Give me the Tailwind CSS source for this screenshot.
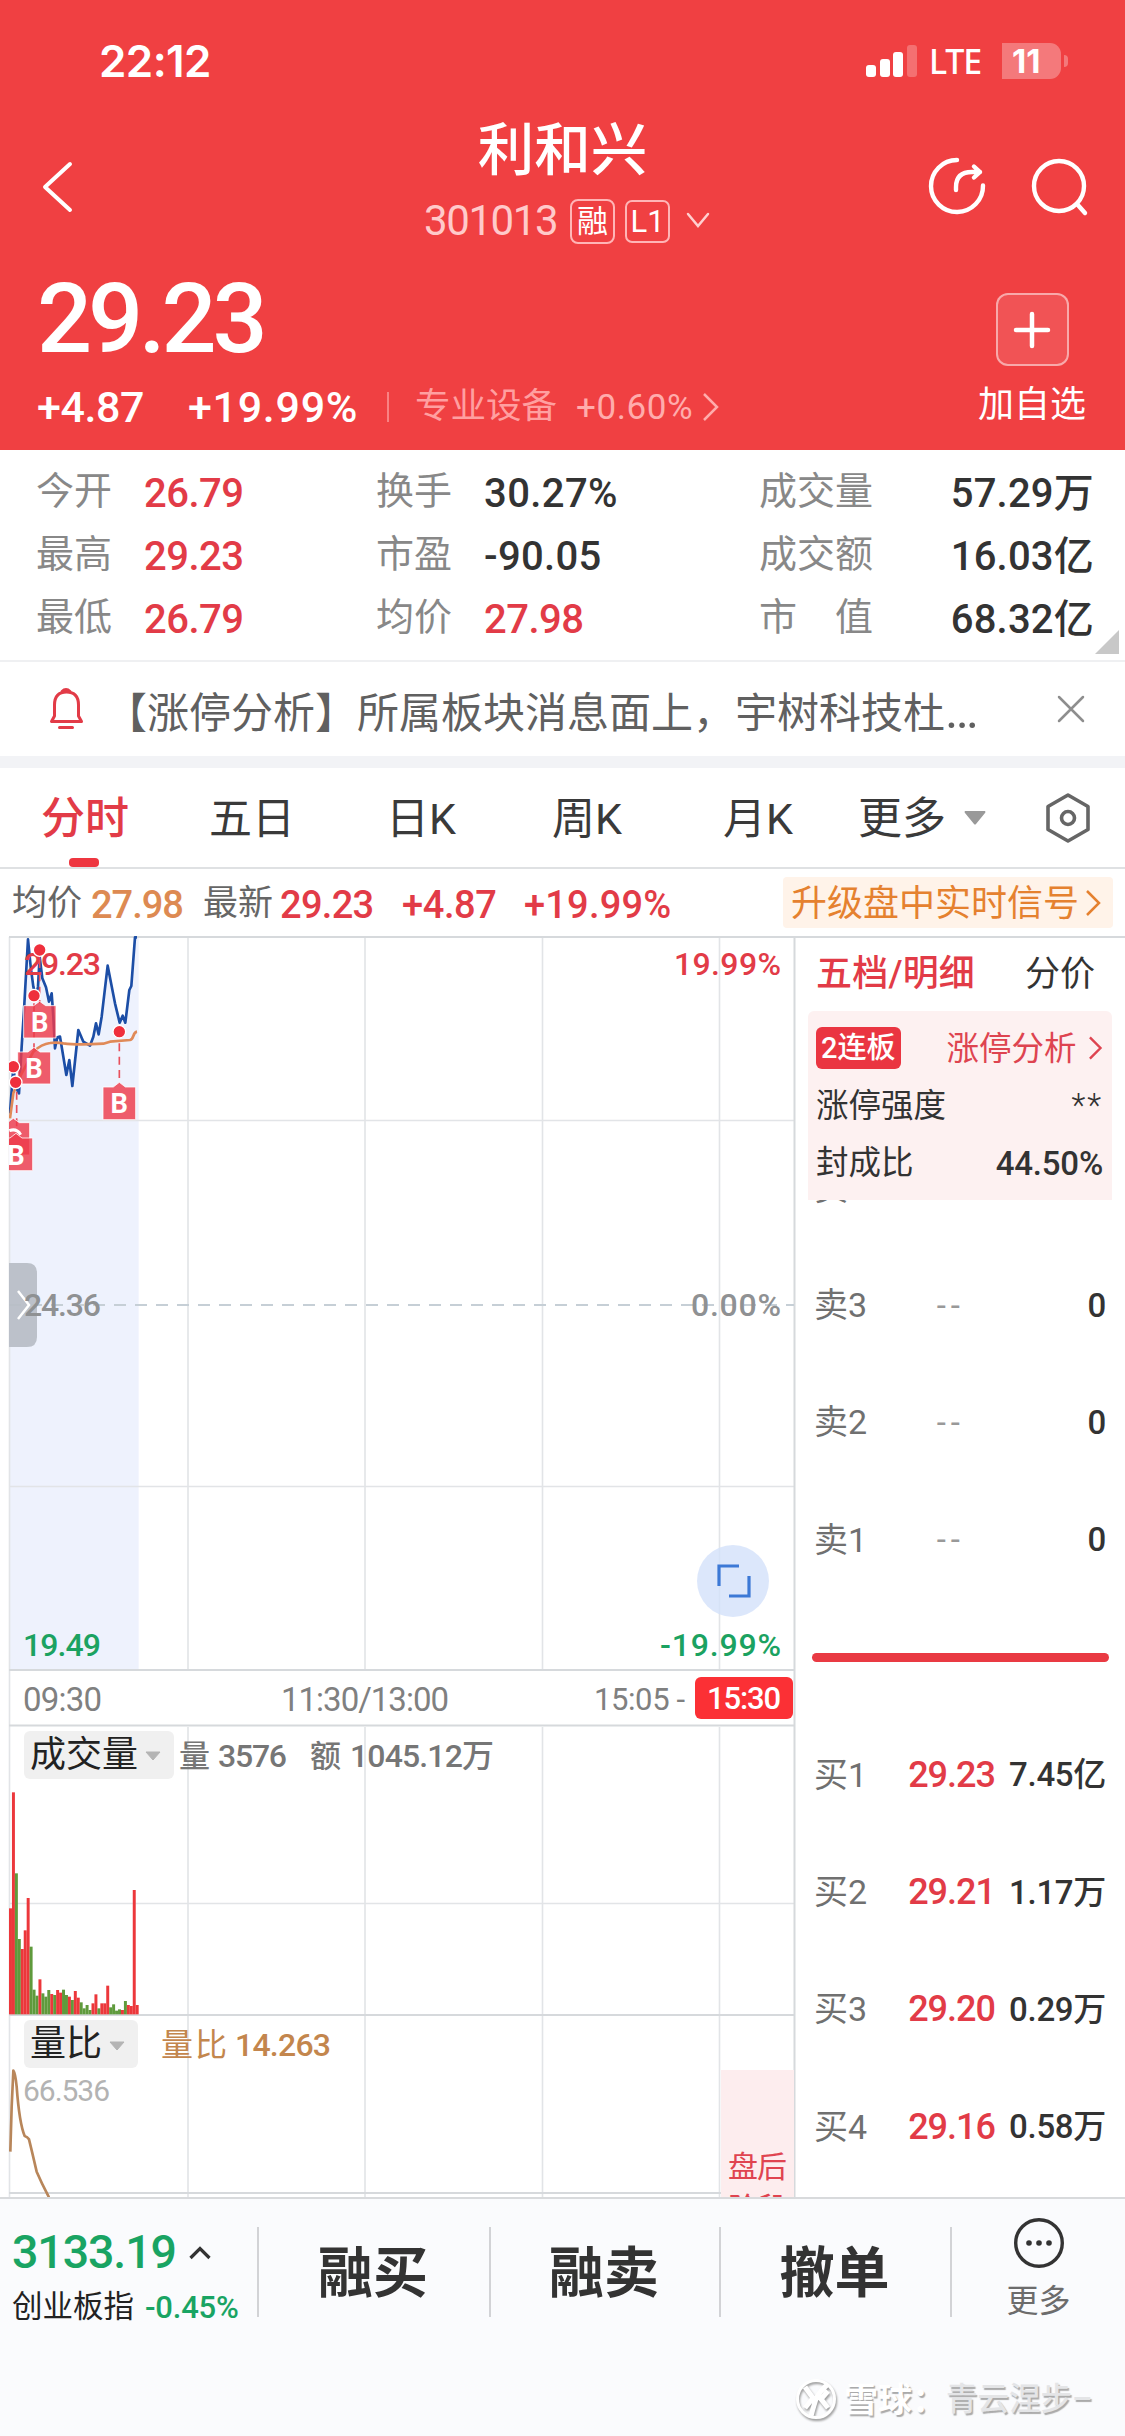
<!DOCTYPE html>
<html lang="zh-CN">
<head>
<meta charset="utf-8">
<title>利和兴 301013</title>
<script src="https://cdn.jsdelivr.net/npm/@tailwindcss/browser@4"></script>
</head>
<body class="w-[1125px] h-[2436px] overflow-hidden bg-white font-[Roboto,'Noto_Sans_CJK_SC',sans-serif] text-[#333] whitespace-nowrap">

<!-- header -->
<header class="h-[450px] bg-[#f04042] text-white">
  <div class="h-[122px] flex items-center pl-[99px]">
    <div class="w-[767px] font-[Inter,sans-serif] font-semibold text-[44px] leading-none tracking-[-0.6px]">22:12</div>
    <svg class="w-[52px] h-[34px]" viewBox="866 44 52 34" fill="#fff"><rect x="866" y="65" width="10" height="12" rx="3"/><rect x="880" y="59" width="10" height="18" rx="3"/><rect x="893" y="52" width="10" height="25" rx="3"/><rect x="907" y="45" width="10" height="32" rx="3" opacity=".25"/></svg>
    <div class="ml-[11px] w-[73px] font-['Noto_Sans'] font-medium text-[34px] leading-none tracking-[-1.2px]">LTE</div>
    <div class="w-[59px] h-[36px] rounded-r-[11px] bg-white/30 font-[Inter,sans-serif] font-bold text-[33px] leading-[36px] pl-[10px]">11</div>
    <div class="ml-[3px] w-[4px] h-[12px] rounded-r-full bg-white/30"></div>
  </div>
  <div class="h-[128px] flex">
    <div class="w-[422px] pt-[38px] pl-[41px]"><svg class="w-[34px] h-[54px]" viewBox="41 160 34 54" fill="none" stroke="#fff" stroke-width="4" stroke-linecap="round" stroke-linejoin="round"><path d="M70 164L45 187L70 210"/></svg></div>
    <div class="w-[500px]">
      <div class="h-[58px] leading-[58px] w-[281px] text-center text-[56.500px] font-medium">利和兴</div>
      <div class="h-[82px] flex items-center">
        <div class="w-[148px] pl-[2px] text-[42px] leading-none tracking-[-1.4px] text-[#ffcaca]">301013</div>
        <div class="w-[45px] h-[45px] rounded-[8px] border-2 border-[#ffb5b6] flex items-center justify-center text-[31px] leading-none">融</div>
        <div class="ml-[10px] w-[45px] h-[43px] rounded-[7px] border-2 border-[#ffb5b6] flex items-center justify-center text-[31px] leading-none">L1</div>
        <svg class="ml-[15px] w-[26px] h-[18px]" viewBox="0 0 26 18" fill="none" stroke="#ffcfcf" stroke-width="2.5" stroke-linecap="round"><path d="M3 2L13 14L23 2"/></svg>
      </div>
    </div>
    <div class="pt-[34px] flex"><svg class="w-[180px] h-[64px]" viewBox="922 156 180 64" fill="none" stroke="#fff" stroke-width="4.4" stroke-linecap="round" stroke-linejoin="round"><path d="M957 160A26 26 0 1 0 983 185.500M956 190V187Q956 172 972 172H980M974 166.500L980 172L974 177.500"/><circle cx="1059" cy="186" r="25"/><path d="M1077 204L1085 213"/></svg></div>
  </div>
  <div class="h-[200px] flex justify-between">
    <div class="pl-[37px]">
      <div class="h-[136px] leading-[138px] text-[97px] font-medium tracking-[-4.2px]">29.23</div>
      <div class="h-[42px] flex items-center leading-none">
        <div class="w-[151px] text-[43px] font-medium tracking-[-0.4px]">+4.87</div>
        <div class="w-[199px] text-[43px] font-medium tracking-[0.7px]">+19.99%</div>
        <div class="w-[2px] h-[30px] bg-[#f98283]"></div>
        <div class="ml-[26px] w-[161px] text-[35.500px] text-[#ff9fa0]">专业设备</div>
        <div class="w-[125px] text-[35px] text-[#ffacac] tracking-[0.6px]">+0.60%</div>
        <svg class="w-[20px] h-[30px]" viewBox="0 0 20 30" fill="none" stroke="#ffacac" stroke-width="2.5"><path d="M3 2L16 15L3 28"/></svg>
      </div>
    </div>
    <div class="pt-[43px] pr-[39px] flex flex-col items-center w-[147px]">
      <div class="w-[73px] h-[73px] rounded-[12px] border-2 border-white/50 bg-white/10 flex items-center justify-center"><svg class="w-[40px] h-[40px]" viewBox="0 0 40 40" stroke="#fff" stroke-width="4.500" stroke-linecap="round"><path d="M4 20H36M20 4V36"/></svg></div>
      <div class="mt-[18px] text-[36px] leading-[42px]">加自选</div>
    </div>
  </div>
</header>

<!-- key figures -->
<section class="relative h-[212px] border-b-2 border-[#eff0f2] pt-[10px] pl-[36px] text-[40px] font-medium tracking-[-0.5px]">
  <div class="grid grid-cols-[108px_232px_108px_275px_140px_195px] auto-rows-[63px] leading-[68px]">
    <div class="text-[38px] leading-[63px] font-normal tracking-normal text-[#888]">今开</div><div class="text-[#e23b47]">26.79</div>
    <div class="text-[38px] leading-[63px] font-normal tracking-normal text-[#888]">换手</div><div class="tracking-[0.4px]">30.27%</div>
    <div class="text-[38px] leading-[63px] font-normal tracking-normal text-[#888]">成交量</div><div class="text-right tracking-[0.2px]">57.29万</div>
    <div class="text-[38px] leading-[63px] font-normal tracking-normal text-[#888]">最高</div><div class="text-[#e23b47]">29.23</div>
    <div class="text-[38px] leading-[63px] font-normal tracking-normal text-[#888]">市盈</div><div class="tracking-[0.3px]">-90.05</div>
    <div class="text-[38px] leading-[63px] font-normal tracking-normal text-[#888]">成交额</div><div class="text-right tracking-[0.2px]">16.03亿</div>
    <div class="text-[38px] leading-[63px] font-normal tracking-normal text-[#888]">最低</div><div class="text-[#e23b47]">26.79</div>
    <div class="text-[38px] leading-[63px] font-normal tracking-normal text-[#888]">均价</div><div class="text-[#e23b47]">27.98</div>
    <div class="text-[38px] leading-[63px] font-normal tracking-normal text-[#888]">市　值</div><div class="text-right tracking-[0.2px]">68.32亿</div>
  </div>
  <svg class="absolute right-[6px] bottom-[6px] w-[24px] h-[24px]" viewBox="0 0 24 24" fill="#c8c8c8"><path d="M24 0V24H0Z"/></svg>
</section>

<!-- notice -->
<section class="h-[94px] flex items-center pl-[48px]">
  <svg class="w-[57px] h-[44px]" viewBox="48 686 57 44" fill="none" stroke="#e23b47" stroke-width="3" stroke-linecap="round" stroke-linejoin="round"><path d="M62 690.500Q66 686.500 70 690.500M51.500 720.500H81.500L78.500 715V704Q78.500 691 66.500 691Q54.500 691 54.500 704V715ZM59.500 726.500H72.500"/></svg>
  <div class="w-[952px] pt-[4px] text-[42px] leading-none text-[#606060]">【涨停分析】所属板块消息面上，宇树科技杜<span class="text-[50px] leading-none">…</span></div>
  <svg class="w-[28px] h-[28px]" viewBox="0 0 28 28" fill="none" stroke="#8e8e8e" stroke-width="2.500" stroke-linecap="round"><path d="M2 2L26 26M26 2L2 26"/></svg>
</section>
<div class="h-[12px] bg-[#f2f3f6]"></div>

<!-- period tabs -->
<nav class="h-[101px] border-b-2 border-[#dfe1e3] flex items-center pl-[41px] text-[43px] leading-[45px] text-[#3a3a3a]">
  <div class="relative w-[168px] h-full flex items-center pt-[3px] text-[44px] font-medium text-[#e23b47]">分时<span class="absolute left-[28px] bottom-0 w-[30px] h-[9px] rounded-[4px] bg-[#ee3640]"></span></div>
  <div class="w-[177px] pt-[3px]">五日</div>
  <div class="w-[166px] pt-[3px]">日K</div>
  <div class="w-[171px] pt-[3px]">周K</div>
  <div class="w-[135px] pt-[3px]">月K</div>
  <div class="w-[106px] pt-[3px] text-[44px]">更多</div>
  <svg class="w-[22px] h-[14px]" viewBox="0 0 22 14" fill="#999"><path d="M1 0H21Q22 1 21 2L12 13Q11 14 10 13L1 2Q0 1 1 0Z"/></svg>
  <svg class="ml-[59px] w-[46px] h-[52px]" viewBox="1045 791 46 52" fill="none" stroke="#666" stroke-width="3.600" stroke-linejoin="round"><path d="M1068 794L1088 805.500V828.500L1068 840L1048 828.500V805.500Z"/><circle cx="1068" cy="817" r="6.500"/></svg>
</nav>

<!-- summary line -->
<div class="h-[67px] flex items-center pl-[12px] text-[38px] leading-none font-medium tracking-[-1px] text-[#e23b47]">
  <div class="w-[79px] pt-[2px] text-[35px] font-normal tracking-normal text-[#666]">均价</div><div class="w-[112px] pt-[4px] text-[#dd8a52]">27.98</div>
  <div class="w-[77px] pt-[2px] text-[35px] font-normal tracking-normal text-[#666]">最新</div><div class="w-[122px] pt-[4px] tracking-[-0.7px]">29.23</div>
  <div class="w-[122px] pt-[4px] tracking-[-0.4px]">+4.87</div><div class="w-[259px] pt-[4px] tracking-[0.2px]">+19.99%</div>
  <div class="w-[330px] h-[51px] rounded-[4px] bg-[#fff3e9] flex items-center pl-[8px] text-[36px] font-normal tracking-normal text-[#e5812f]"><span class="pt-[2px]">升级盘中实时信号</span><svg class="ml-[5px] w-[18px] h-[30px]" viewBox="0 0 18 30" fill="none" stroke="#e5812f" stroke-width="2.500"><path d="M3 3L15 15L3 27"/></svg></div>
</div>

<main class="h-[1261px] flex overflow-hidden">
  <!-- charts -->
  <div class="w-[796px]">
    <svg class="block w-[796px] h-[1261px]" viewBox="0 936 796 1261" font-family="Roboto, 'Noto Sans CJK SC', sans-serif" font-size="32">
      <defs><clipPath id="plot"><rect x="27" y="100" width="2400" height="2400"/></clipPath></defs>
      <g transform="translate(0 900) scale(.33333)" clip-path="url(#plot)">
        <path fill="#eef2fd" d="M30 640L35 570L40 500L47 560L57 580L65 440L72 330L84 118L92 200L100 260L108 290L114 260L119 170L127 235L138 262L147 305L155 280L160 350L165 445L172 412L180 410L190 470L199 525L208 480L217 558L235 390L250 425L270 437L280 410L288 370L296 403L305 350L323 197L345 310L359 368L368 347L376 368L388 270L394 258L405 112H416V2312H30Z"/>
      </g>
      <g fill="none" stroke="#e2e4e7" stroke-width="1.600">
        <path d="M9.500 937V2197M188 937V1671M365 937V1671M542.500 937V1671M719.500 937V1671M188 1727V2197M365 1727V2197M542.500 1727V2197M719.500 1727V2197M9 1120.500H794M9 1486.500H794M9 1903.500H794"/>
        <path stroke="#d6d9dc" stroke-width="2" d="M794.500 937V2197M9 937H796M9 1670H795M9 1725.500H795M9 2015H795M9 2193H795"/>
        <path stroke="#c6cfd6" stroke-width="2" stroke-dasharray="12 9" d="M9 1305H794"/>
      </g>
      <path d="M9 1263H27Q37 1263 37 1273V1337Q37 1347 27 1347H9Z" fill="#b8bdc6" opacity=".93"/>
      <path d="M18 1291L29 1305L18 1319" fill="none" stroke="#fff" stroke-width="2.500"/>
      <g transform="translate(0 900) scale(.33333)" clip-path="url(#plot)" fill="none" stroke-linejoin="round">
        <path stroke="#1c4ea6" stroke-width="8" d="M30 640L35 570L40 500L47 560L57 580L65 440L72 330L84 118L92 200L100 260L108 290L114 260L119 170L127 235L138 262L147 305L155 280L160 350L165 445L172 412L180 410L190 470L199 525L208 480L217 558L235 390L250 425L270 437L280 410L288 370L296 403L305 350L323 197L345 310L359 368L368 347L376 368L388 270L394 258L405 112H411"/>
        <path stroke="#e08a58" stroke-width="8" d="M30 655L40 580L60 530L100 455Q125 432 150 429Q170 426 190 430Q230 436 310 431L330 425L390 420Q397 418 400 408Q404 396 411 395"/>
      </g>
      <g fill="#e23b47" font-weight="500">
        <text x="24" y="975" textLength="77">29.23</text>
        <text x="674" y="975" textLength="107">19.99%</text>
      </g>
      <g transform="translate(0 900) scale(.33333)" clip-path="url(#plot)">
        <g stroke="#e8505c" stroke-width="5" stroke-dasharray="24 16" fill="none"><path d="M358 430V545M119 180V310M102 310V450M50 575V700"/></g>
        <g fill="#ee3a4b" fill-opacity=".82" stroke="#fff" stroke-opacity=".8" stroke-width="3">
          <path d="M-9 668H22L40 655L58 668H89V765H-9Z"/>
          <path d="M-1 714H30L48 700L66 714H98V812H-1Z"/>
          <path d="M53 456H84L102 442L120 456H152V552H53Z"/>
          <path d="M71 317H101L119 304L137 317H168V414H71Z"/>
          <path d="M309 561H340L358 547L376 561H407V659H309Z"/>
        </g>
        <path d="M28 692Q50 684 62 704" fill="none" stroke="#fff" stroke-width="9"/>
        <g fill="#ef2f3c" stroke="#fff" stroke-width="4"><circle cx="40" cy="500" r="19"/><circle cx="47" cy="547" r="19"/><circle cx="102" cy="287" r="19"/><circle cx="119" cy="150" r="19"/><circle cx="358" cy="395" r="19"/></g>
        <g fill="#fff" font-family="Roboto, sans-serif" font-size="82" font-weight="700" text-anchor="middle"><text x="48" y="795">B</text><text x="102" y="535">B</text><text x="119" y="397">B</text><text x="358" y="640">B</text></g>
      </g>
      <g fill="#8f9193" font-weight="500">
        <text x="24" y="1316" textLength="77">24.36</text>
        <text x="691" y="1316" textLength="90">0.00%</text>
      </g>
      <circle cx="733" cy="1581" r="36" fill="#d3e1fa" fill-opacity=".8"/>
      <path d="M719 1586V1566H739M729 1596H749V1576" fill="none" stroke="#3c79d6" stroke-width="3.200"/>
      <g fill="#1ba261" font-weight="500">
        <text x="23" y="1656" textLength="78">19.49</text>
        <text x="660" y="1656" textLength="121">-19.99%</text>
      </g>
      <g fill="#808080" font-size="33">
        <text x="23" y="1711" textLength="79">09:30</text>
        <text x="281" y="1711" textLength="168">11:30/13:00</text>
        <text x="594" y="1710" textLength="91" font-size="31">15:05 -</text>
      </g>
      <rect x="695" y="1677" width="98" height="42" rx="6" fill="#fb3035"/>
      <text x="707" y="1709" textLength="74" fill="#fff" font-weight="500" font-size="31">15:30</text>

      <rect x="24" y="1731" width="150" height="48" rx="6" fill="#f0f0f0"/>
      <text x="30" y="1767" font-size="36" fill="#222">成交量</text>
      <path d="M146 1752H160L153 1760Z" fill="#b4b4b4" stroke="#b4b4b4" stroke-linejoin="round"/>
      <g fill="#767676" font-weight="500">
        <text x="179" y="1767" font-size="31">量</text><text x="218" y="1767" textLength="69">3576</text>
        <text x="310" y="1767" font-size="31">额</text><text x="350" y="1767" textLength="144">1045.12万</text>
      </g>
      <g id="bars" transform="translate(0 1700) scale(.33333)"></g>

      <rect x="24" y="2020" width="114" height="48" rx="6" fill="#f0f0f0"/>
      <text x="30" y="2056" font-size="36" fill="#222">量比</text>
      <path d="M110 2042H124L117 2050Z" fill="#b4b4b4" stroke="#b4b4b4" stroke-linejoin="round"/>
      <g fill="#c3864d"><text x="161" y="2056" textLength="66">量比</text><text x="235" y="2056" textLength="96" font-weight="500">14.263</text></g>
      <text x="23" y="2101" textLength="87" font-size="30" fill="#b3b3b3">66.536</text>
      <path transform="translate(0 1700) scale(.33333)" fill="none" stroke="#b8865a" stroke-width="8" stroke-linejoin="round" d="M31 1355L35 1220L40 1112Q46 1120 50 1160Q58 1270 74 1308Q82 1310 87 1318Q95 1350 110 1415Q125 1450 147 1492"/>
      <rect x="721" y="2070" width="73" height="127" fill="#fdedee"/>
      <g fill="#e04450" font-size="30"><text x="728" y="2177" textLength="59">盘后</text><text x="728" y="2219" textLength="59">阶段</text></g>
    </svg>
  </div>

  <!-- order book -->
  <aside class="relative w-[329px] border-t-2 border-[#d6d9dc]">
    <div class="h-[70px] flex items-center pl-[20px] pt-[2px] text-[35px] leading-none">
      <div class="w-[209px] text-[36px] font-medium tracking-[0.2px] text-[#e23b47]">五档/明细</div><div>分价</div>
    </div>
    <div class="absolute left-[12px] top-[73px] w-[304px] h-[189px] rounded-t-[6px] bg-[#fdf1f1] z-10 pl-[8px] pr-[9px] text-[32.500px] leading-none">
      <div class="h-[74px] flex items-center">
        <div class="w-[88px] h-[42px] rounded-[6px] bg-[#ea3541] text-white text-[29px] leading-[43px] text-center font-medium">2连板</div>
        <div class="ml-[46px] pt-[2px] text-[#de4450]">涨停分析</div>
        <svg class="ml-[11px] w-[16px] h-[28px]" viewBox="0 0 16 28" fill="none" stroke="#de4450" stroke-width="2.500"><path d="M2 3L13 14L2 25"/></svg>
      </div>
      <div class="h-[42px] flex items-center justify-between"><span>涨停强度</span><span class="tracking-[2px] font-light">**</span></div>
      <div class="h-[72px] flex items-center justify-between"><span>封成比</span><span class="font-medium text-[33px] tracking-[-0.2px]">44.50%</span></div>
    </div>
    <div class="mt-[121px] grid grid-cols-[90px_98px_104px] auto-rows-[117.400px] items-center pl-[18px] leading-none text-right text-[33px] font-medium tracking-[-0.3px]">
      <div class="text-left text-[34px] font-normal tracking-normal text-[#707070]">卖4</div><div></div><div></div>
      <div class="text-left text-[34px] font-normal tracking-normal text-[#707070]">卖3</div><div class="pr-[37px] text-[#999] font-normal tracking-[5px]">--</div><div>0</div>
      <div class="text-left text-[34px] font-normal tracking-normal text-[#707070]">卖2</div><div class="pr-[37px] text-[#999] font-normal tracking-[5px]">--</div><div>0</div>
      <div class="text-left text-[34px] font-normal tracking-normal text-[#707070]">卖1</div><div class="pr-[37px] text-[#999] font-normal tracking-[5px]">--</div><div>0</div>
      <div class="col-span-3 -ml-[2px] w-[297px] h-[9px] rounded-full bg-[#e93a43]"></div>
      <div class="text-left text-[34px] font-normal tracking-normal text-[#707070]">买1</div><div class="pr-[7px] text-[36px] text-[#e23b47] tracking-[-1px]">29.23</div><div>7.45亿</div>
      <div class="text-left text-[34px] font-normal tracking-normal text-[#707070]">买2</div><div class="pr-[7px] text-[36px] text-[#e23b47] tracking-[-1px]">29.21</div><div>1.17万</div>
      <div class="text-left text-[34px] font-normal tracking-normal text-[#707070]">买3</div><div class="pr-[7px] text-[36px] text-[#e23b47] tracking-[-1px]">29.20</div><div>0.29万</div>
      <div class="text-left text-[34px] font-normal tracking-normal text-[#707070]">买4</div><div class="pr-[7px] text-[36px] text-[#e23b47] tracking-[-1px]">29.16</div><div>0.58万</div>
    </div>
  </aside>
</main>

<!-- bottom bar -->
<footer class="relative h-[239px] bg-[#fafbfd] border-t-2 border-[#d8dadc]">
  <div class="flex h-[146px] items-center leading-none">
    <div class="w-[257px] pl-[12px] pt-[17px]">
      <div class="h-[54px] flex items-center text-[46.500px] font-medium text-[#19a463] tracking-[-1.1px]"><span class="w-[177px]">3133.19</span><svg class="w-[22px] h-[14px]" viewBox="0 0 22 14" fill="none" stroke="#333" stroke-width="3.200"><path d="M1.500 12L11 2.500L20.500 12"/></svg></div>
      <div class="h-[56px] flex items-center text-[30.500px] text-[#222]"><span class="w-[133px]">创业板指</span><span class="text-[31px] font-medium text-[#19a463] tracking-[-0.2px]">-0.45%</span></div>
    </div>
    <div class="h-[90px] w-[232px] border-l-2 border-[#d2d3d6] flex items-center justify-center pr-[2px] pt-[2px] text-[55px] font-bold">融买</div>
    <div class="h-[90px] w-[230px] border-l-2 border-[#d2d3d6] flex items-center justify-center pr-[2px] pt-[2px] text-[55px] font-bold">融卖</div>
    <div class="h-[90px] w-[231px] border-l-2 border-[#d2d3d6] flex items-center justify-center pr-[2px] pt-[2px] text-[55px] font-bold">撤单</div>
    <div class="h-[90px] w-[175px] border-l-2 border-[#d2d3d6] flex flex-col items-center justify-center gap-[16px] pb-[10px]">
      <svg class="w-[52px] h-[52px] shrink-0" viewBox="0 0 52 52" fill="#333"><circle cx="26" cy="26" r="23.300" fill="none" stroke="#333" stroke-width="3.400"/><circle cx="16" cy="26" r="2.800"/><circle cx="26" cy="26" r="2.800"/><circle cx="36" cy="26" r="2.800"/></svg>
      <div class="text-[32px] text-[#6c6c6c]">更多</div>
    </div>
  </div>
  <div class="absolute left-[796px] top-[179px] flex h-[44px] items-center leading-none text-[33px] text-white [text-shadow:1.5px_1.5px_1px_#aaa]">
    <svg class="w-[44px] h-[44px] drop-shadow-[1px_2px_1px_#999]" viewBox="0 0 44 44" fill="none" stroke="#fff"><circle cx="20" cy="21" r="18.500" stroke-width="3"/><path stroke-width="5" d="M9 9L17 20L9 30M31 7Q23 14 20 21Q18 27 15 38M32 13L25 21L32 30"/></svg>
    <div class="ml-[4px] w-[102px] text-[34px] font-bold">雪球：</div><div class="text-[31.500px] font-medium text-[#e4e5e7]">青云涅步–</div>
  </div>
</footer>

<script>
// minute volume: direction and bar top on the panel's inner scale (baseline 943)
const volume = "R625 R277 G520 G717 R747 R691 R594 G740 G869 G887 R838 G880 G890 G870 R882 G885 R870 R878 G869 G885 R890 G900 R873 R893 G907 G925 G915 G930 R910 R883 G925 R910 R910 R857 G922 G913 G932 G928 R930 G903 R915 R918 R570 R915".split(" ");
document.getElementById("bars").innerHTML = volume.map((v, i) => {
  const top = +v.slice(1);
  return `<rect x="${27 + i * 8.84}" y="${top}" width="8.9" height="${943 - top}" fill="${v[0] === "R" ? "#ec373b" : "#5f9a3c"}"/>`;
}).join("");
</script>
</body>
</html>
